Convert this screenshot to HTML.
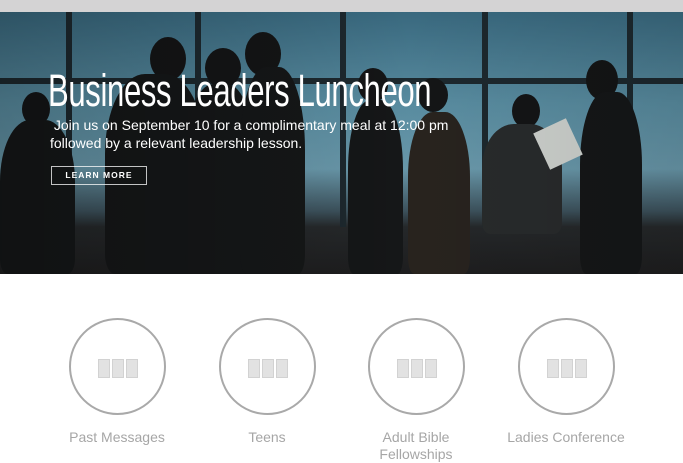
<!DOCTYPE html>
<html><head><meta charset="utf-8"><style>
*{margin:0;padding:0;box-sizing:border-box}
body{width:683px;height:463px;overflow:hidden;background:#fff;font-family:"Liberation Sans",sans-serif;position:relative}
.top{position:absolute;left:0;top:0;width:683px;height:12px;background:#d4d3d4}
.hero{position:absolute;left:0;top:12px;width:683px;height:262px;overflow:hidden;
background:linear-gradient(180deg,#3c6e85 0%,#5d93a8 35%,#6e9fb2 60%,#3f5560 76%,#272a2c 82%,#1f1f20 100%)}
.hero .b{position:absolute;background:#1e2a30}
.s{position:absolute;background:#161819;border-radius:40% 40% 10% 10%}
.h{position:absolute;background:#151617;border-radius:50%}
.shade{position:absolute;left:0;top:0;width:100%;height:100%;background:linear-gradient(90deg,rgba(0,0,0,.25),rgba(0,0,0,.05) 60%,rgba(0,0,0,.15))}
h1{position:absolute;left:48px;top:53px;font-weight:normal;color:#fff;font-size:45px;white-space:nowrap;transform:scaleX(0.69);transform-origin:left top;letter-spacing:-0.5px}
p.sub{position:absolute;left:50px;top:104px;color:#fff;font-size:14px;line-height:18px;width:420px}
.btn{position:absolute;left:51px;top:154px;width:96px;height:19px;border:1px solid rgba(255,255,255,.75);color:#fff;font-size:8.5px;font-weight:bold;letter-spacing:1px;text-align:center;line-height:17px}
.item{position:absolute;top:318px;width:150px;text-align:center}
.c{width:97px;height:97px;border:2px solid #a9a9a9;border-radius:50%;margin:0 auto;position:relative}
.c i{position:absolute;top:39px;width:12px;height:19px;background:#e2e2e2;border:1px solid #d2d2d2}
.lbl{margin-top:14px;color:#a6a6a6;font-size:14px;line-height:17px}
</style></head><body>
<div class="top"></div>
<div class="hero">
<div class="b" style="left:66px;top:0;width:6px;height:215px"></div>
<div class="b" style="left:195px;top:0;width:6px;height:215px"></div>
<div class="b" style="left:340px;top:0;width:6px;height:215px"></div>
<div class="b" style="left:482px;top:0;width:6px;height:215px"></div>
<div class="b" style="left:627px;top:0;width:6px;height:215px"></div>
<div class="b" style="left:0;top:66px;width:683px;height:6px"></div>
<div class="h" style="left:22px;top:80px;width:28px;height:34px"></div>
<div class="s" style="left:0;top:108px;width:75px;height:154px"></div>
<div class="h" style="left:150px;top:25px;width:36px;height:44px"></div>
<div class="s" style="left:105px;top:62px;width:100px;height:200px"></div>
<div class="h" style="left:205px;top:36px;width:36px;height:40px"></div>
<div class="s" style="left:185px;top:72px;width:70px;height:190px"></div>
<div class="h" style="left:245px;top:20px;width:36px;height:44px"></div>
<div class="s" style="left:240px;top:55px;width:65px;height:207px"></div>
<div class="h" style="left:358px;top:56px;width:30px;height:34px"></div>
<div class="s" style="left:348px;top:88px;width:55px;height:174px"></div>
<div class="h" style="left:418px;top:66px;width:30px;height:34px"></div>
<div class="s" style="left:408px;top:100px;width:62px;height:162px;background:#2a2520"></div>
<div class="h" style="left:512px;top:82px;width:28px;height:34px"></div>
<div class="s" style="left:482px;top:112px;width:80px;height:110px;background:#2a2d2e"></div>
<div class="h" style="left:586px;top:48px;width:32px;height:40px"></div>
<div class="s" style="left:580px;top:80px;width:62px;height:182px"></div>
<div style="position:absolute;left:540px;top:112px;width:36px;height:40px;background:#d8dcd8;transform:rotate(-25deg)"></div>
<div class="shade"></div>
<h1>Business Leaders Luncheon</h1>
<p class="sub">&nbsp;Join us on September 10 for a complimentary meal at 12:00 pm followed by a relevant leadership lesson.</p>
<div class="btn">LEARN MORE</div>
</div>
<div class="item" style="left:42px"><div class="c"><i style="left:27px"></i><i style="left:41px"></i><i style="left:55px"></i></div><div class="lbl">Past Messages</div></div>
<div class="item" style="left:192px"><div class="c"><i style="left:27px"></i><i style="left:41px"></i><i style="left:55px"></i></div><div class="lbl">Teens</div></div>
<div class="item" style="left:341px"><div class="c"><i style="left:27px"></i><i style="left:41px"></i><i style="left:55px"></i></div><div class="lbl">Adult Bible<br>Fellowships</div></div>
<div class="item" style="left:491px"><div class="c"><i style="left:27px"></i><i style="left:41px"></i><i style="left:55px"></i></div><div class="lbl">Ladies Conference</div></div>
</body></html>
